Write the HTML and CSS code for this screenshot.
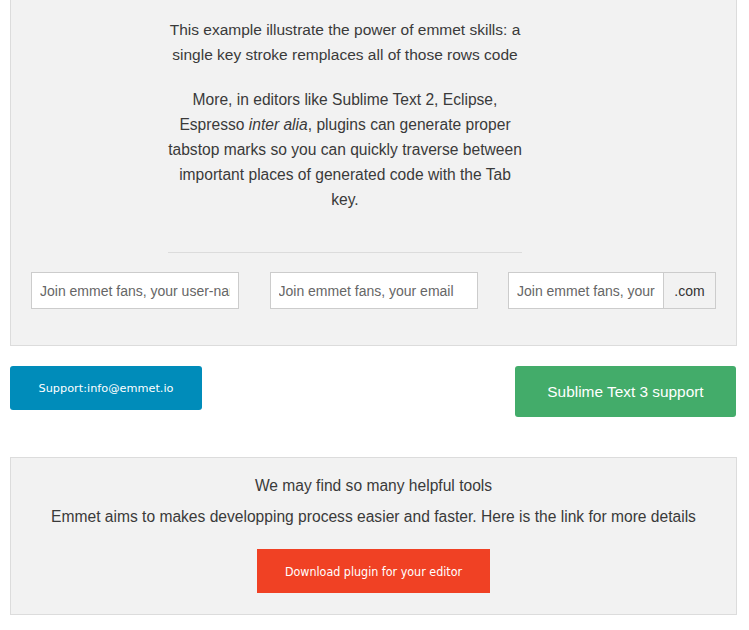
FILE: index.html
```html
<!DOCTYPE html>
<html>
<head>
<meta charset="utf-8">
<link rel="stylesheet" href="styles.css">
</head>
<body>
<div class="page">
  <section class="panel panel-top">
    <div class="intro">
      <p class="lead">This example illustrate the power of emmet skills: a single key stroke remplaces all of those rows code</p>
      <p class="more">More, in editors like Sublime Text 2, Eclipse, Espresso <em>inter alia</em>, plugins can generate proper tabstop marks so you can quickly traverse between important places of generated code with the Tab key.</p>
      <hr class="rule">
    </div>
    <form class="fields">
      <input class="field" type="text" placeholder="Join emmet fans, your user-name">
      <input class="field" type="text" placeholder="Join emmet fans, your email">
      <div class="group">
        <input class="field field-grow" type="text" placeholder="Join emmet fans, your website">
        <span class="addon">.com</span>
      </div>
    </form>
  </section>

  <div class="actions">
    <a class="btn btn-blue">Support:info@emmet.io</a>
    <a class="btn btn-green">Sublime Text 3 support</a>
  </div>

  <section class="panel panel-bottom">
    <p class="tools">We may find so many helpful tools</p>
    <p class="tools tools-second">Emmet aims to makes developping process easier and faster. Here is the link for more details</p>
    <a class="btn btn-red">Download plugin for your editor</a>
  </section>
</div>
</body>
</html>
```
FILE: styles.css
```css
html, body {
  margin: 0;
  padding: 0;
  background: #fff;
}
body {
  font-family: "Liberation Sans", Arial, sans-serif;
  color: #333;
}
.page {
  margin-left: 10px;
  width: 727px;
}
.panel {
  background: #f2f2f2;
  border: 1px solid #dcdcdc;
  box-sizing: border-box;
}
.panel-top {
  border-top: 0;
  padding: 17px 0 36px 0;
}
.intro {
  width: 360px;
  margin-left: 154px;
  text-align: center;
}
.lead {
  margin: 0 3px;
  font-size: 15.5px;
  line-height: 25px;
  color: #3a3a3a;
}
.more {
  margin: 20px 3px 0 3px;
  font-size: 15.6px;
  line-height: 25px;
  color: #3a3a3a;
}
.rule {
  margin: 40px 3px 0 3px;
  border: 0;
  border-top: 1px solid #dcdcdc;
  height: 0;
}
.fields {
  margin: 19px 0 0 20px;
  width: 685px;
  display: grid;
  grid-template-columns: 208px 208px 208px;
  justify-content: space-between;
}
.field {
  box-sizing: border-box;
  height: 37px;
  width: 100%;
  border: 1px solid #ccc;
  background: #fff;
  padding: 0 8px;
  font-family: "Liberation Sans", Arial, sans-serif;
  font-size: 14px;
  color: #555;
  margin: 0;
  outline: none;
}
.field::placeholder {
  color: #666;
}
.group {
  display: flex;
}
.field-grow {
  flex: 1;
  min-width: 0;
  border-right: 0;
}
.addon {
  box-sizing: border-box;
  width: 53px;
  height: 37px;
  border: 1px solid #ccc;
  background: #f2f2f2;
  display: flex;
  align-items: center;
  justify-content: center;
  font-size: 14px;
  color: #333;
}
.actions {
  margin-top: 20px;
  display: flex;
  justify-content: space-between;
  align-items: flex-start;
}
.btn {
  display: flex;
  align-items: center;
  justify-content: center;
  color: #fff;
  box-sizing: border-box;
  text-decoration: none;
}
.btn-blue {
  width: 192px;
  height: 44px;
  background: #008cba;
  border-radius: 3px;
  font-family: "DejaVu Sans", sans-serif;
  font-size: 11.3px;
}
.btn-green {
  width: 221px;
  height: 51px;
  margin-right: 1px;
  background: #43ac6a;
  border-radius: 3px;
  font-size: 15.4px;
}
.panel-bottom {
  margin-top: 40px;
  padding: 15px 0 21px 0;
  text-align: center;
}
.tools {
  margin: 0;
  font-size: 15.6px;
  line-height: 25px;
  color: #3a3a3a;
}
.tools-second {
  margin-top: 6px;
}
.btn-red {
  margin: 20px auto 0 auto;
  width: 233px;
  height: 44px;
  background: #f04124;
  font-family: "DejaVu Sans Condensed", "DejaVu Sans", sans-serif;
  font-size: 12.4px;
}
```
